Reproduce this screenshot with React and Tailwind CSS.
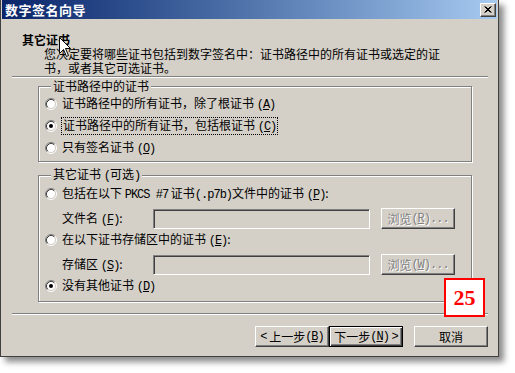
import React from "react";

// Win2000 look: gray face, etched frames, sunken fields
const Key = ({ k }) => (
  <span className="font-['Liberation_Mono',monospace] text-[12px] tracking-[-1px]">
    (<u>{k}</u>)
  </span>
);

const Lat = ({ children }) => (
  <span className="font-['Liberation_Mono',monospace] text-[12px] tracking-[-1px]">
    {children}
  </span>
);

const Radio = ({ checked }) => (
  <svg width="12" height="12" viewBox="0 0 12 12" className="shrink-0">
    <circle cx="6" cy="6" r="4.5" fill="#fff" />
    <path d="M2.11 9.89A5.5 5.5 0 0 1 9.89 2.11" fill="none" stroke="#808080" />
    <path d="M9.89 2.11A5.5 5.5 0 0 1 2.11 9.89" fill="none" stroke="#fff" />
    <path d="M2.82 9.18A4.5 4.5 0 0 1 9.18 2.82" fill="none" stroke="#404040" />
    <path d="M9.18 2.82A4.5 4.5 0 0 1 2.82 9.18" fill="none" stroke="#d4d0c8" />
    {checked && <circle cx="6" cy="6" r="2" fill="#000" />}
  </svg>
);

const RadioRow = ({ checked, focus, children, className = "" }) => (
  <div className={"flex h-[22px] items-center gap-[5px] " + className}>
    <Radio checked={checked} />
    <span
      className={
        focus ? "-ml-px border border-dotted border-black px-px leading-[13px]" : ""
      }
    >
      {children}
    </span>
  </div>
);

const Group = ({ title, children, className = "" }) => (
  <fieldset
    className={
      "ml-[37px] w-[434px] border border-[#808080] pl-[6px] shadow-[1px_1px_0_#fff,inset_1px_1px_0_#fff] " +
      className
    }
  >
    <legend className="ml-[6px] bg-[#d4d0c8] px-[2px]">{title}</legend>
    {children}
  </fieldset>
);

const FileRow = ({ label, k, btnKey }) => (
  <div className="mt-[3px] flex h-[21px] items-center pl-[17px]">
    <span className="w-[91px]">
      {label} <Key k={k} />:
    </span>
    <div className="h-[20px] w-[217px] border border-t-[#808080] border-l-[#808080] border-r-white border-b-white shadow-[inset_1px_1px_0_#404040]" />
    <button
      disabled
      className="ml-[11px] flex h-[21px] w-[74px] items-center justify-center border border-t-white border-l-white border-r-[#404040] border-b-[#404040] text-[#808080] shadow-[inset_-1px_-1px_0_#808080] [text-shadow:1px_1px_0_#fff]"
    >
      浏览 <Key k={btnKey} />
      <Lat>...</Lat>
    </button>
  </div>
);

const Etched = ({ className = "" }) => (
  <div
    className={
      "ml-[11px] w-[476px] border-t border-b border-t-[#808080] border-b-white " + className
    }
  />
);

const WinButton = ({ children, primary }) => (
  <button
    className={
      primary
        ? "flex h-[21px] w-[74px] items-center justify-center border border-black shadow-[inset_1px_1px_0_#fff,inset_-1px_-1px_0_#404040,inset_-2px_-2px_0_#808080]"
        : "flex h-[21px] w-[74px] items-center justify-center border border-t-white border-l-white border-r-[#404040] border-b-[#404040] shadow-[inset_-1px_-1px_0_#808080]"
    }
  >
    {children}
  </button>
);

const CloseButton = () => (
  <div className="flex h-[14px] w-[16px] items-center justify-center border border-t-white border-l-white border-r-[#404040] border-b-[#404040] bg-[#d4d0c8] shadow-[inset_-1px_-1px_0_#808080]">
    <svg width="8" height="7" viewBox="0 0 8 7">
      <path d="M0.5 0.5L6.5 6.5M1.5 0.5L7.5 6.5M6.5 0.5L0.5 6.5M7.5 0.5L1.5 6.5" stroke="#000" />
    </svg>
  </div>
);

const Cursor = () => (
  <svg
    width="13"
    height="21"
    viewBox="0 0 13 21"
    className="absolute left-[58px] top-[37px]"
  >
    <path
      d="M0.5 0.5V16.5L4.5 12.5L7.5 19.5L9.5 18.5L6.5 11.5H11.5Z"
      fill="#fff"
      stroke="#000"
    />
  </svg>
);

export default function App() {
  return (
    <div className="h-[373px] w-[515px] bg-white font-['Noto_Sans_CJK_SC',sans-serif] text-[12px] leading-[14px] text-black">
      <div className="relative flex h-[357px] w-[499px] flex-col border border-t-0 border-[#404040] bg-[#d4d0c8] shadow-[5px_5px_6px_rgba(0,0,0,0.45)]">
        <div className="mx-px flex h-[19px] items-center justify-between bg-linear-to-r from-[#0a246a] to-[#a6caf0] pl-[3px] pr-[1px]">
          <span className="text-[13px] font-bold tracking-[0.5px] text-white">数字签名向导</span>
          <CloseButton />
        </div>

        <div className="pl-[21px] pt-[14px] font-bold">其它证书</div>
        <div className="pl-[43px]">
          您决定要将哪些证书包括到数字签名中：证书路径中的所有证书或选定的证
          <br />
          书，或者其它可选证书。
        </div>
        <Etched className="mt-px" />

        <Group title="证书路径中的证书" className="mt-px pb-[2px]">
          <RadioRow>
            证书路径中的所有证书，除了根证书 <Key k="A" />
          </RadioRow>
          <RadioRow checked focus>
            证书路径中的所有证书，包括根证书 <Key k="C" />
          </RadioRow>
          <RadioRow>
            只有签名证书 <Key k="O" />
          </RadioRow>
        </Group>

        <Group
          title={
            <>
              其它证书 <Lat>(</Lat>可选<Lat>)</Lat>
            </>
          }
          className="mt-[5px] pb-[4px]"
        >
          <RadioRow>
            包括在以下 <Lat>PKCS #7</Lat> 证书<Lat>(.p7b)</Lat>文件中的证书 <Key k="P" />:
          </RadioRow>
          <FileRow label="文件名" k="F" btnKey="R" />
          <RadioRow>
            在以下证书存储区中的证书 <Key k="E" />:
          </RadioRow>
          <FileRow label="存储区" k="S" btnKey="W" />
          <RadioRow checked>
            没有其他证书 <Key k="D" />
          </RadioRow>
        </Group>

        <Etched className="mt-[11px]" />

        <div className="mt-[11px] flex justify-end pr-[10px]">
          <WinButton>
            <Lat>&lt;</Lat>&nbsp;上一步 <Key k="B" />
          </WinButton>
          <WinButton primary>
            下一步 <Key k="N" />&nbsp;<Lat>&gt;</Lat>
          </WinButton>
          <div className="ml-[11px]">
            <WinButton>取消</WinButton>
          </div>
        </div>

        <Cursor />
        <div className="absolute left-[443px] top-[278px] flex h-[39px] w-[41px] items-center justify-center border-2 border-[#ff0000] bg-white font-['Liberation_Serif',serif] text-[22px] font-bold leading-none text-[#ff0000]">
          25
        </div>
      </div>
    </div>
  );
}
